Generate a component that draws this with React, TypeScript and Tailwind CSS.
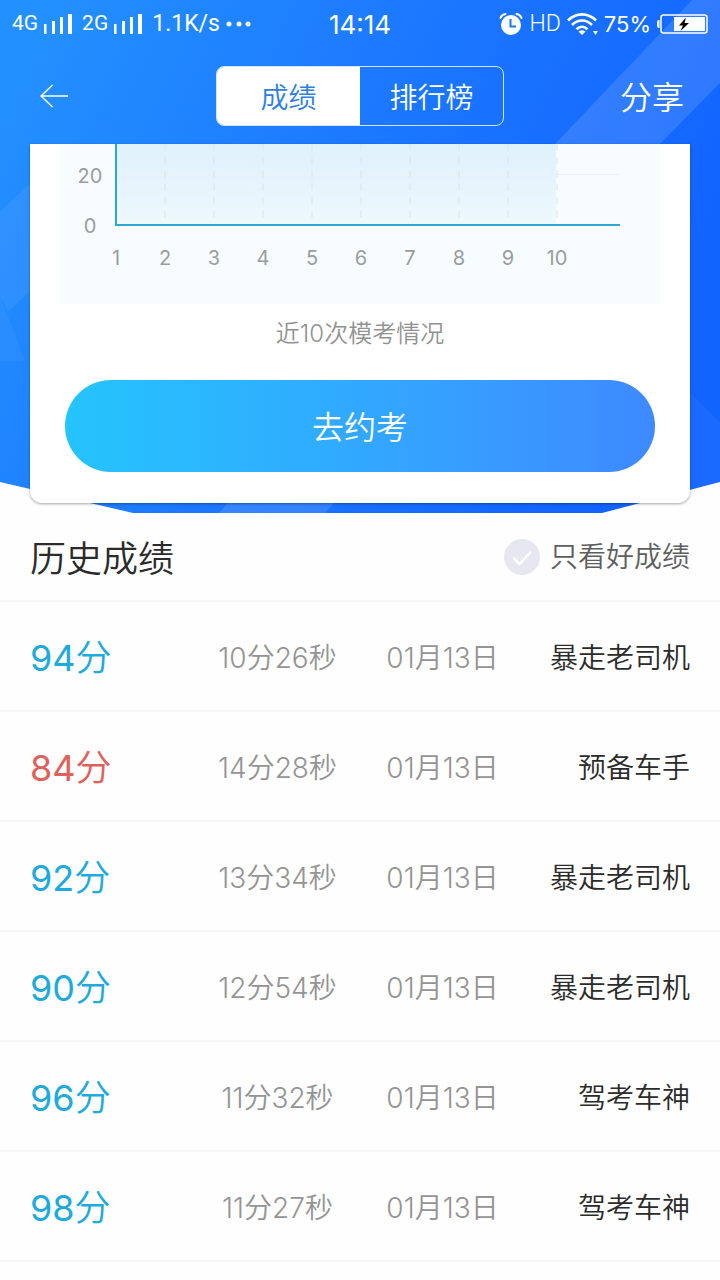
import { useState } from "react";

type Result = {
  score: number;
  time: string;
  date: string;
  rank: string;
};

const results: Result[] = [
  { score: 94, time: "10分26秒", date: "01月13日", rank: "暴走老司机" },
  { score: 84, time: "14分28秒", date: "01月13日", rank: "预备车手" },
  { score: 92, time: "13分34秒", date: "01月13日", rank: "暴走老司机" },
  { score: 90, time: "12分54秒", date: "01月13日", rank: "暴走老司机" },
  { score: 96, time: "11分32秒", date: "01月13日", rank: "驾考车神" },
  { score: 98, time: "11分27秒", date: "01月13日", rank: "驾考车神" },
];

const PASS_SCORE = 90;

function SignalBars() {
  return (
    <svg viewBox="0 0 28 20" className="h-5 w-7 shrink-0" fill="currentColor">
      <rect x="0" y="10" width="2.5" height="10" />
      <rect x="8" y="7" width="3" height="13" />
      <rect x="16" y="3" width="3" height="17" />
      <rect x="24" y="0" width="4" height="20" />
    </svg>
  );
}

function AlarmIcon() {
  return (
    <svg viewBox="0 0 24 24" className="h-6 w-6 shrink-0" fill="none">
      <circle cx="12" cy="13" r="10" fill="#fff" />
      <path d="M1.5 6A6 6 0 0 1 6.5 2M17.5 2a6 6 0 0 1 5 4" stroke="#fff" strokeWidth="2" strokeLinecap="round" />
      <path d="M11.5 7v7.5H17" stroke="#1c76ff" strokeWidth="2" />
    </svg>
  );
}

function WifiIcon() {
  return (
    <svg viewBox="0 0 31 22" className="h-[22px] w-[31px] shrink-0" fill="none">
      <path
        d="M1 7.5C9 -0.7 21 -0.7 29 7.5M5 12c6-6 14-6 20 0M9.5 16.2c3.4-3.2 7.6-3.2 11 0"
        stroke="#fff"
        strokeWidth="2.6"
      />
      <path d="M11.5 18.5q3.5-2.5 7 0L15 22zM26 18h5l-2.5 4z" fill="#fff" />
    </svg>
  );
}

function BatteryIcon() {
  return (
    <svg viewBox="0 0 51 20" className="h-5 w-[51px] shrink-0" fill="none">
      <path d="M2.5 6C0 6 0 7.5 0 10s0 4 2.5 4z" fill="#fff" />
      <rect x="4" y="1" width="46" height="18" rx="2.5" stroke="#fff" strokeWidth="1.5" />
      <rect x="17" y="3" width="31" height="14" fill="#fff" />
      <path d="M29 3.5L22 11.500h4L23.500 17l8.500-8h-4.500z" fill="#000" />
    </svg>
  );
}

function StatusBar() {
  return (
    <div className="grid h-12 grid-cols-[1fr_auto_1fr] items-center px-3 text-white">
      <div className="flex items-center font-[Roboto] font-normal">
        <span className="text-[21px]">4G</span>
        <span className="ml-1.5 flex">
          <SignalBars />
        </span>
        <span className="ml-2.5 text-[21px]">2G</span>
        <span className="ml-1.5 flex">
          <SignalBars />
        </span>
        <span className="ml-2.5 text-[23px]">1.1K/s</span>
        <svg viewBox="0 0 26 6" className="ml-1.5 h-1.5 w-[26px] shrink-0" fill="currentColor">
          <circle cx="3" cy="3" r="2.5" />
          <circle cx="13" cy="3" r="2.5" />
          <circle cx="22" cy="3" r="2.5" />
        </svg>
      </div>
      <span className="text-[26px] font-normal">14:14</span>
      <div className="flex items-center justify-end gap-1.5">
        <AlarmIcon />
        <span className="font-[Roboto] text-[23px]">HD</span>
        <WifiIcon />
        <span className="text-[22px] font-normal">75%</span>
        <BatteryIcon />
      </div>
    </div>
  );
}

function Backdrop() {
  return (
    <svg
      viewBox="0 0 720 513"
      preserveAspectRatio="none"
      className="absolute inset-0 -z-10 h-full w-full"
      aria-hidden="true"
    >
      <defs>
        <linearGradient id="sky" gradientUnits="userSpaceOnUse" x1="0" y1="100" x2="620" y2="400">
          <stop offset="0" stopColor="#2390ff" />
          <stop offset="0.5" stopColor="#1c78ff" />
          <stop offset="1" stopColor="#1264ff" />
        </linearGradient>
      </defs>
      <path d="M0 0H720V482L602 513H133L0 482z" fill="url(#sky)" />
      <g fill="#fff">
        <path d="M692 0H720V83L660 144L325 513H219L555 144z" fillOpacity="0.12" />
        <path d="M30 183V291L8 312L0 295V212z" fillOpacity="0.06" />
        <path d="M0 295L25 361H0z" fillOpacity="0.04" />
        <path d="M690 393L720 422V482L690 490z" fillOpacity="0.04" />
      </g>
    </svg>
  );
}

function TopNav() {
  return (
    <nav className="grid h-24 grid-cols-[1fr_288px_1fr] items-center px-9 text-white">
      <button type="button" aria-label="返回" className="flex h-9 w-9 items-center justify-center">
        <svg viewBox="0 0 28 24" className="h-6 w-7" fill="none" stroke="currentColor" strokeWidth="1.5">
          <path d="M28 12H1M12.5 1L1 12l11.5 11" />
        </svg>
      </button>
      <div className="grid h-[60px] grid-cols-2 overflow-hidden rounded-lg border border-white/80 text-[28px]">
        <button type="button" className="bg-white pt-1 text-[#2f80dc]">
          成绩
        </button>
        <button type="button" className="pt-1">
          排行榜
        </button>
      </div>
      <button type="button" className="justify-self-end pt-1 text-[32px]">
        分享
      </button>
    </nav>
  );
}

function ScoreChart() {
  const ticks = [1, 2, 3, 4, 5, 6, 7, 8, 9, 10];
  const tickX = (n: number) => 56 + (n - 1) * 49;

  return (
    <svg viewBox="0 0 600 160" className="block w-full bg-[#f7fcff]" role="img" aria-label="近10次模考情况">
      <defs>
        <linearGradient id="area" x1="0" y1="0" x2="0" y2="1">
          <stop offset="0" stopColor="#dff1fa" />
          <stop offset="0.65" stopColor="#e8f5fd" />
          <stop offset="1" stopColor="#eef9fb" />
        </linearGradient>
      </defs>
      <rect x="56" y="0" width="440" height="81" fill="url(#area)" />
      <path d="M56 30.5H560" stroke="#e9f1f4" />
      {ticks.slice(1).map((n) => (
        <path key={n} d={`M${tickX(n)} 0V76`} stroke="#d8e6e9" strokeDasharray="7 6.3" />
      ))}
      <path d="M56 0V81H560" fill="none" stroke="#2fa6d0" strokeWidth="2" />
      <g fill="#999da0" fontSize="20" fontWeight="400" textAnchor="middle">
        <text x="30" y="39">20</text>
        <text x="30" y="89">0</text>
        {ticks.map((n) => (
          <text key={n} x={tickX(n)} y="121">
            {n}
          </text>
        ))}
      </g>
    </svg>
  );
}

function SummaryCard() {
  return (
    <section className="mx-[30px] rounded-b-xl bg-white pb-[31px] shadow-[0_1px_3px_rgba(0,0,0,0.35)]">
      <div className="mx-[30px]">
        <ScoreChart />
      </div>
      <p className="pt-3 text-center text-2xl leading-9 text-[#929292]">近10次模考情况</p>
      <div className="px-[35px] pt-7">
        <button
          type="button"
          className="h-[92px] w-full rounded-full bg-linear-to-r from-[#24c4fc] via-[#31a8ff] to-[#3e89ff] pt-1 text-[32px] text-white"
        >
          去约考
        </button>
      </div>
    </section>
  );
}

export default function App() {
  const [onlyGood, setOnlyGood] = useState(false);
  const rows = onlyGood ? results.filter((r) => r.score >= PASS_SCORE) : results;

  return (
    <div className="min-h-screen bg-[#fefefe] font-[Inter,'Noto_Sans_CJK_SC',sans-serif] font-[350]">
      <header className="relative isolate pb-2.5">
        <Backdrop />
        <StatusBar />
        <TopNav />
        <SummaryCard />
      </header>

      <main>
        <div className="flex h-[89px] items-center justify-between border-b-2 border-[#f5f6f6] px-[30px]">
          <h2 className="pt-1 text-4xl font-[350] text-[#2b2b2b]">历史成绩</h2>
          <label className="flex items-center gap-2.5 text-[28px] text-[#5e5e5e]">
            <span className="relative flex h-9 w-9">
              <input
                type="checkbox"
                checked={onlyGood}
                onChange={(e) => setOnlyGood(e.target.checked)}
                className="h-9 w-9 appearance-none rounded-full bg-[#e6e7f0] checked:bg-[#1eaadc]"
              />
              <svg
                viewBox="0 0 36 36"
                className="pointer-events-none absolute inset-0"
                fill="none"
                stroke="#fff"
                strokeWidth="2.5"
              >
                <path d="M9.5 19l6 6L27 12.5" />
              </svg>
            </span>
            只看好成绩
          </label>
        </div>

        <table className="w-full table-fixed border-separate border-spacing-0 text-[28px]">
          <tbody className="[&_td]:h-[110px] [&_td]:border-b-2 [&_td]:border-[#f5f6f6] [&_td]:pt-1">
            {rows.map((r, index) => (
              <tr key={index}>
                <td
                  className={
                    r.score >= PASS_SCORE
                      ? "w-[195px] pl-[30px] text-4xl text-[#1eaadc]"
                      : "w-[195px] pl-[30px] text-4xl text-[#e0605c]"
                  }
                >
                  <span className="font-normal">{r.score}</span>分
                </td>
                <td className="text-center text-[#949494]">{r.time}</td>
                <td className="text-center text-[#949494]">{r.date}</td>
                <td className="w-[195px] pr-[30px] text-right whitespace-nowrap text-[#2b2b2b]">{r.rank}</td>
              </tr>
            ))}
          </tbody>
        </table>
      </main>
    </div>
  );
}
